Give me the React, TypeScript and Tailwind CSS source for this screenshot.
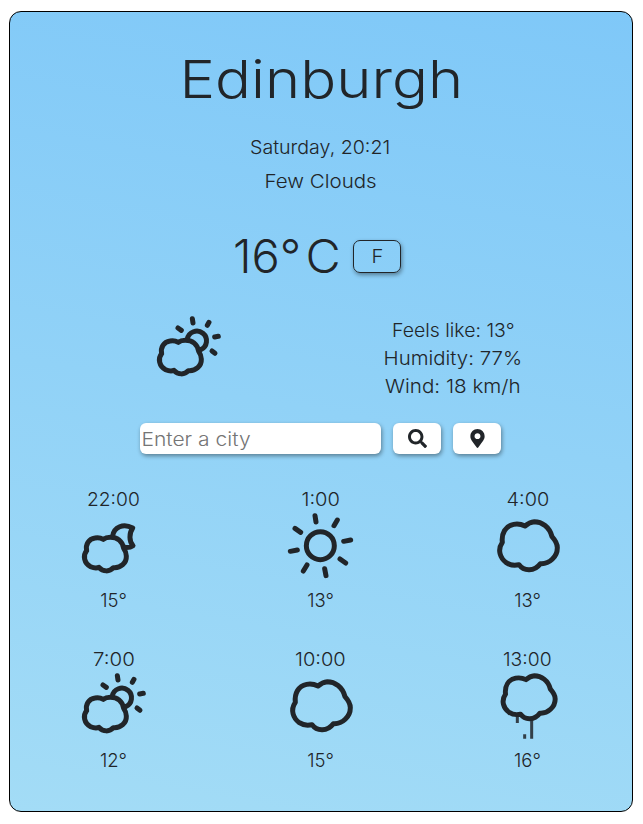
import { useLayoutEffect, useRef, useState } from 'react';
import type { ReactNode } from 'react';
import { FaMapMarkerAlt, FaSearch } from 'react-icons/fa';

// A single line of text stretched horizontally to a set width.
function Line({ width, className = '', children }: { width: number; className?: string; children: string }) {
  const ref = useRef<HTMLSpanElement>(null);
  const [scale, setScale] = useState(1);
  useLayoutEffect(() => {
    if (ref.current) setScale(width / ref.current.offsetWidth);
  }, [width, children]);
  return (
    <span className={`flex justify-center whitespace-nowrap ${className}`} style={{ width }}>
      <span ref={ref} className="inline-block shrink-0" style={{ transform: `scaleX(${scale})` }}>
        {children}
      </span>
    </span>
  );
}

function Icon({ children }: { children: ReactNode }) {
  return (
    <svg
      viewBox="11 75 240 216"
      className="h-[72px] w-20 shrink-0"
      fill="none"
      stroke="#212529"
      strokeWidth="15"
      strokeLinecap="round"
      strokeLinejoin="round"
    >
      {children}
    </svg>
  );
}

const smallCloud =
  'M99 163C92 159 82 157 74 159C55 162 45 178 49 197C37 211 41 235 61 245C70 249 79 250 86 247C98 261 118 261 129 248C151 250 169 234 168 213C168 204 165 197 160 190C156 168 140 157 120 157C112 157 104 159 99 163Z';
const bigCloud =
  'M122 123C110 117 98 116 88 118C63 123 51 145 54 172C38 195 48 220 66 233C78 241 92 242 104 239C119 260 150 260 168 236C195 238 219 215 219 188C219 175 212 165 203 155C196 125 172 110 150 110C138 111 130 116 122 123Z';

function CloudSun() {
  return (
    <Icon>
      <path d={smallCloud} />
      <path d="M126 153A29 29 0 1 1 166 185" />
      <path d="M141 92l2 13M191 103l-5 9M98 120l10 7M208 147l11-2M200 189l9 7" />
    </Icon>
  );
}

function CloudMoon() {
  return (
    <Icon>
      <path d={smallCloud} />
      <path d="M127 153C131 126 159 114 187 129C176 145 176 169 188 182C180 188 171 188 162 187" />
    </Icon>
  );
}

function Sun() {
  return (
    <Icon>
      <circle cx="129" cy="182" r="42" />
      <path d="M113 92l3 19M180 105l-10 17M199 169l21-4M188 222l17 12M142 251l4 21M89 240l-11 18M39 199l21-4M53 130l17 12" />
    </Icon>
  );
}

function Cloud() {
  return (
    <Icon>
      <path d={bigCloud} />
    </Icon>
  );
}

function CloudRain() {
  return (
    <Icon>
      <g strokeWidth="9" strokeLinecap="butt" opacity=".85">
        <path d="M99 208v26M142 222v59M121 268v13" />
      </g>
      <path d={bigCloud} transform="translate(14.8 -5.8) scale(.903 .892)" strokeWidth="16.5" />
    </Icon>
  );
}

const hours = [
  { time: '22:00', timeWidth: 53, temp: '15°', tempWidth: 27, icon: <CloudMoon /> },
  { time: '1:00', timeWidth: 38, temp: '13°', tempWidth: 27, icon: <Sun /> },
  { time: '4:00', timeWidth: 43, temp: '13°', tempWidth: 27, icon: <Cloud /> },
  { time: '7:00', timeWidth: 42, temp: '12°', tempWidth: 27, icon: <CloudSun /> },
  { time: '10:00', timeWidth: 51, temp: '15°', tempWidth: 27, icon: <Cloud /> },
  { time: '13:00', timeWidth: 49, temp: '16°', tempWidth: 27, icon: <CloudRain /> },
];

const shadow = 'shadow-[1px_2px_4px_rgba(0,0,0,0.4)]';

export default function App() {
  return (
    <div className="h-[824px] bg-white pt-[11px] pl-[9px] font-['Inter','Liberation_Sans',sans-serif] font-light text-[#212529]">
      <main className="flex h-[801px] w-[624px] flex-col items-center rounded-xl border border-black bg-linear-[190deg,#7fc8f8,#a3dcf6]">
        <h1 className="mt-[37px]">
          <Line width={284} className="text-[52px] leading-[62px]">Edinburgh</Line>
        </h1>
        <div className="mt-[19px] mr-px flex flex-col items-center text-[18.5px] leading-[34px]">
          <Line width={140}>Saturday, 20:21</Line>
          <Line width={112}>Few Clouds</Line>
        </div>

        <div className="mt-[28px] flex h-[60px] w-full items-center pl-[223px] text-[47px] leading-[60px]">
          <Line width={68}>16°</Line>
          <Line width={35} className="ml-[5px]">C</Line>
          <button className={`ml-[12px] flex h-[33px] w-[48px] items-center justify-center rounded-[7px] border border-[#212529] text-[18.5px] leading-none ${shadow}`}>
            <Line width={12}>F</Line>
          </button>
        </div>

        <div className="mt-[27px] flex w-full">
          <div className="pl-[139px]">
            <CloudSun />
          </div>
          <div className="mt-[3px] ml-[143px] flex w-[162px] flex-col items-center text-[18.5px] leading-[28px]">
            <Line width={123}>Feels like: 13°</Line>
            <Line width={139}>Humidity: 77%</Line>
            <Line width={136}>Wind: 18 km/h</Line>
          </div>
        </div>

        <form className="mt-[23px] mr-px flex gap-3">
          <label className={`flex h-[31px] w-[241px] items-center rounded-md bg-white pt-[2px] pl-[2px] text-[18.5px] text-[#757575] ${shadow}`}>
            <Line width={109}>Enter a city</Line>
          </label>
          <button type="button" className={`flex h-[31px] w-[48px] items-center justify-center rounded-md bg-white text-[19px] ${shadow}`}>
            <FaSearch />
          </button>
          <button type="button" className={`flex h-[31px] w-[48px] items-center justify-center rounded-md bg-white text-[19px] ${shadow}`}>
            <FaMapMarkerAlt />
          </button>
        </form>

        <section className="mt-[31px] mr-px grid w-[621px] grid-cols-3 gap-y-[30px]">
          {hours.map((h) => (
            <div key={h.time} className="flex h-[130px] flex-col items-center text-[18.5px] leading-[28px]">
              <Line width={h.timeWidth}>{h.time}</Line>
              <div className="-mt-[3px] flex h-[72px] items-center">{h.icon}</div>
              <Line width={h.tempWidth} className="mt-[4px]">{h.temp}</Line>
            </div>
          ))}
        </section>
      </main>
    </div>
  );
}
